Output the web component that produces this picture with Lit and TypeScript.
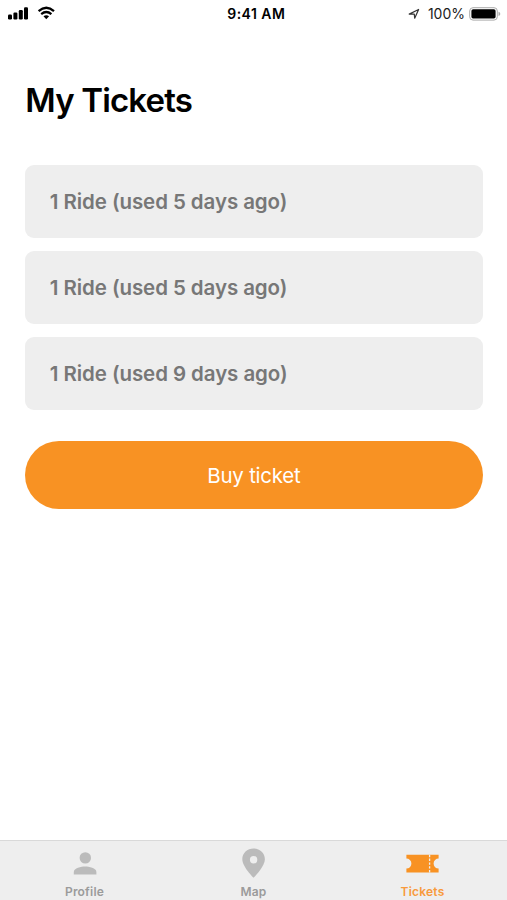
import { LitElement, html, css } from "lit";
import { customElement } from "lit/decorators.js";

const rides = ["5 days ago", "5 days ago", "9 days ago"];

@customElement("app-root")
export class AppRoot extends LitElement {
  static styles = css`
    :host {
      display: flex;
      flex-direction: column;
      height: 900px;
      box-sizing: border-box;
      background: #fff;
      color: #000;
      font-family: Inter, "Liberation Sans", sans-serif;
      overflow: hidden;
    }
    svg { display: block; flex: none; }
    .status {
      display: grid;
      grid-template-columns: 1fr auto 1fr;
      align-items: center;
      height: 27px;
      padding: 0 6px 0 8px;
    }
    .left { display: flex; }
    .time { padding-left: 3.5px; font-size: 14px; font-weight: 600; letter-spacing: 0.45px; line-height: 27px; }
    .right {
      display: flex;
      justify-content: flex-end;
      align-items: center;
      color: #1c1c1c;
      font-size: 14px;
      line-height: 27px;
      letter-spacing: 0;
    }
    .pct { margin: 0 4px 0 8px; }
    .main { flex: 1; padding: 0 24.5px 0 25.3px; }
    h1 { margin: 52px 0 0; font-size: 33px; line-height: 42px; font-weight: 600; letter-spacing: -0.84px; }
    .list { display: flex; flex-direction: column; gap: 13px; margin-top: 44px; }
    .ticket {
      height: 73px;
      box-sizing: border-box;
      padding-left: 24.5px;
      border-radius: 9px;
      background: #eee;
      color: #777;
      font-size: 20.5px;
      font-weight: 600;
      line-height: 74px;
      letter-spacing: -0.08px;
    }
    .buy {
      display: block;
      width: 100%;
      height: 68px;
      margin-top: 31px;
      padding: 0;
      border: 0;
      border-radius: 34px;
      background: #f89223;
      color: #fff;
      font: 400 20.5px/69px Inter, sans-serif;
      letter-spacing: -0.25px;
    }
    .tabs {
      display: grid;
      grid-template-columns: repeat(3, 1fr);
      height: 60px;
      box-sizing: border-box;
      border-top: 1px solid #d9d9d9;
      background: #eee;
      color: #9b9b9b;
    }
    .tab { display: flex; flex-direction: column; align-items: center; padding-top: 6px; }
    .tab svg { fill: #bbb; }
    .label { margin-top: 3px; font-size: 12px; line-height: 16px; font-weight: 600; letter-spacing: 0.2px; }
    .active { color: #f89a3c; }
    .active svg { fill: #f89223; }
  `;

  render() {
    return html`
      <div class="status">
        <div class="left">
          <svg width="50" height="27" viewBox="0 0 50 27">
            <rect x="0" y="14.5" width="4" height="5" rx="1.2" />
            <rect x="5.4" y="12.5" width="4" height="7" rx="1.2" />
            <rect x="10.8" y="10" width="4" height="9.5" rx="1.2" />
            <rect x="16" y="7.3" width="4" height="12.2" rx="1.2" />
            <path d="M30.6 11.1Q38.3 4.5 46 11.1" fill="none" stroke="#000" stroke-width="2.3" />
            <path d="M33.2 14.1Q38.3 9.9 43.4 14.1" fill="none" stroke="#000" stroke-width="2.2" />
            <path d="M35.5 16.2Q38.3 14.2 41.1 16.2L38.3 19.3z" />
          </svg>
        </div>
        <div class="time">9:41 AM</div>
        <div class="right">
          <svg width="12" height="12" viewBox="0 0 12 12">
            <path d="M1.2 6.1 10.6 1.5 6.7 10.2 6.3 6.2z" fill="none" stroke="#333" stroke-width="1.2" stroke-linejoin="round" />
          </svg>
          <span class="pct">100%</span>
          <svg width="32" height="14" viewBox="0 0 32 14">
            <rect x=".7" y=".7" width="27.6" height="12.4" rx="3.3" fill="#fff" stroke="#aaa" stroke-width="1" />
            <rect x="2.4" y="2.3" width="24.2" height="9.2" rx="1.7" />
            <path d="M29.5 4.7q1.8.6 1.8 2.2t-1.8 2.2z" fill="#aaa" />
          </svg>
        </div>
      </div>
      <div class="main">
        <h1>My Tickets</h1>
        <div class="list">
          ${rides.map((when) => html`<div class="ticket">1 Ride (used ${when})</div>`)}
        </div>
        <button class="buy">Buy ticket</button>
      </div>
      <nav class="tabs">
        <div class="tab">
          <svg width="34" height="34" viewBox="0 0 34 34">
            <circle cx="17.3" cy="10.9" r="5.7" />
            <path d="M5.8 27.5v-2.6c0-3.7 7.4-5.4 11.3-5.4s11.3 1.7 11.3 5.4v2.6z" />
          </svg>
          <span class="label">Profile</span>
        </div>
        <div class="tab">
          <svg width="34" height="34" viewBox="0.4 0 34 34">
            <path fill-rule="evenodd" d="M17 1.5C10.6 1.5 5.7 6.2 5.7 12.2 5.7 19.7 17 30.7 17 30.7S28.3 19.7 28.3 12.2C28.3 6.2 23.4 1.5 17 1.5zM17 9a3.7 3.7 0 1 1 0 7.4A3.7 3.7 0 0 1 17 9z" />
          </svg>
          <span class="label">Map</span>
        </div>
        <div class="tab active">
          <svg width="34" height="34" viewBox="0.4 0 34 34">
            <path d="M.8 7.8H33v3.8a5 5 0 0 0 0 10v3.8H.8v-3.8a5 5 0 0 0 0-10z" />
            <path d="M24 7.8v17.6" stroke="#eee" stroke-width="1.3" stroke-dasharray="2.4 1.4" />
          </svg>
          <span class="label">Tickets</span>
        </div>
      </nav>
    `;
  }
}
